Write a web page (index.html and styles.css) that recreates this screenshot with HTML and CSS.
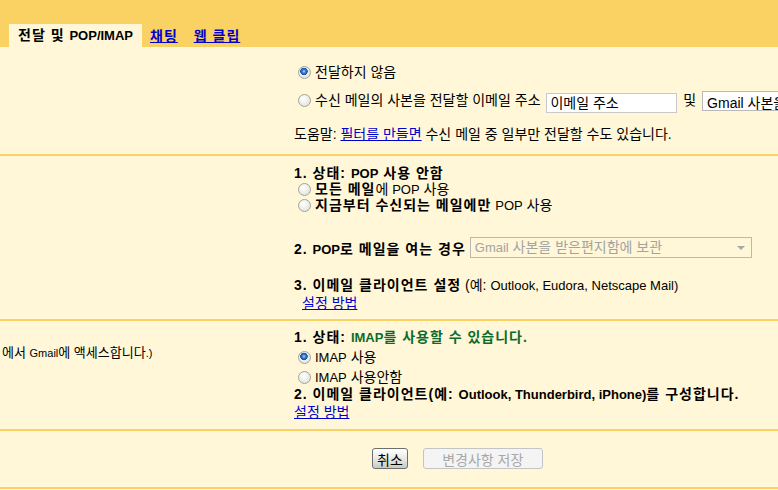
FILE: index.html
```html
<!DOCTYPE html>
<html lang="ko">
  <head>
    <meta charset="UTF-8" />
    <link rel="stylesheet" href="styles.css">
    <title>설정 - 전달 및 POP/IMAP</title>
  </head>
  <body>
    <div class="tabs">
      <span class="tab active">전달 및 <span class="en">POP/IMAP</span></span>
      <a class="tab" href="#">채팅</a>
      <a class="tab" href="#">웹 클립</a>
    </div>

    <div class="section forward">
      <div class="label"></div>
      <div class="content">
        <label class="opt first"><input type="radio" name="fwd" checked />전달하지 않음</label>
        <label class="opt addr">
          <input type="radio" name="fwd" />수신 메일의 사본을 전달할 이메일 주소
          <input class="text" type="text" value="이메일 주소" />
          및
          <select class="keep"><option>Gmail 사본을 받은편지함에 보관</option></select>
        </label>
        <p class="help">도움말: <a href="#">필터를 만들면</a> 수신 메일 중 일부만 전달할 수도 있습니다.</p>
      </div>
    </div>

    <div class="section pop">
      <div class="label"></div>
      <div class="content">
        <div class="head"><b>1. 상태: <span class="en">POP</span> 사용 안함</b></div>
        <label class="opt"><input type="radio" name="pop" /><b>모든 메일</b>에 <span class="en">POP</span> 사용</label>
        <label class="opt"><input type="radio" name="pop" /><b>지금부터 수신되는 메일에만</b> <span class="en">POP</span> 사용</label>
        <div class="when">
          <b>2. <span class="en">POP</span>로 메일을 여는 경우</b>
          <span class="fakeSelect"><span class="en">Gmail</span> 사본을 받은편지함에 보관</span>
        </div>
        <div class="client"><b>3. 이메일 클라이언트 설정</b> (예: <span class="en">Outlook, Eudora, Netscape Mail)</span></div>
        <a class="howto indent" href="#">설정 방법</a>
      </div>
    </div>

    <div class="section imap">
      <div class="label"><span class="cut">에서 <small>Gmail</small>에 액세스합니다<small>.)</small></span></div>
      <div class="content">
        <div class="head"><b>1. 상태: <span class="ok"><span class="en">IMAP</span>를 사용할 수 있습니다.</span></b></div>
        <div class="radios">
          <label class="opt"><input type="radio" name="imap" checked /><span class="en">IMAP</span> 사용</label>
          <label class="opt"><input type="radio" name="imap" /><span class="en">IMAP</span> 사용안함</label>
        </div>
        <div class="client"><b>2. 이메일 클라이언트(예: <span class="en">Outlook, Thunderbird, iPhone)</span>를 구성합니다.</b></div>
        <a class="howto" href="#">설정 방법</a>
      </div>
    </div>

    <div class="section actions">
      <div class="label"></div>
      <div class="content">
        <button type="button" class="btn">취소</button>
        <button type="button" class="btn" disabled>변경사항 저장</button>
      </div>
    </div>
  </body>
</html>
```

FILE: styles.css
```css
html,
body {
  margin: 0;
  overflow: hidden;
}

body {
  font-family: "Liberation Sans", "Noto Sans CJK KR", sans-serif;
  font-size: 14px;
  color: #000;
  background-color: #fff7d7;
  width: 778px;
  height: 490px;
}

.en {
  font-size: 13px;
}

/* old fake-bold hangul is a pixel wider per glyph */
b,
.tab {
  letter-spacing: 1px;
}

b .en,
.tab .en {
  letter-spacing: 0;
}

a {
  color: #0000cc;
}

.tabs {
  background-color: #fad163;
  height: 47px;
  display: flex;
  align-items: flex-end;
  padding-left: 9px;
}

.tab {
  font-weight: bold;
  line-height: 22px;
  padding: 0 8px 0 8px;
}

.tab.active {
  background-color: #fff7d7;
  padding: 0 9px 0 9px;
}

.section {
  display: grid;
  grid-template-columns: 294px 1fr;
  border-bottom: 2px solid #fad163;
  white-space: nowrap;
}

.content {
  display: flex;
  flex-direction: column;
  align-items: flex-start;
}

.opt,
.head,
.client,
.howto {
  display: block;
}

/* radios drawn like the old windows ones */
input[type="radio"] {
  appearance: none;
  box-sizing: border-box;
  width: 13px;
  height: 13px;
  margin: 0 4px 0 4px;
  border: 1px solid #a4a49c;
  border-radius: 50%;
  background: radial-gradient(circle at 40% 35%, #ffffff, #dcdcd4);
  vertical-align: -2px;
}

input[type="radio"]:checked {
  background: radial-gradient(circle at 45% 40%, #bfe0ff 0, #3c86d8 1.5px, #1a4f9e 3.5px, transparent 4px),
    radial-gradient(circle at 40% 35%, #ffffff, #dcdcd4);
}

/* forwarding */
.forward .content {
  padding: 16px 0 11px 0;
}

.forward .first {
  height: 18px;
  line-height: 18px;
}

.forward .addr {
  margin-top: 8px;
  height: 22px;
  line-height: 22px;
}

.text {
  box-sizing: border-box;
  width: 131px;
  height: 20px;
  margin: 0 2px;
  padding: 0 3px;
  border: 1px solid #c9c9c9;
  font: inherit;
  vertical-align: -3px;
}

.keep {
  appearance: none;
  box-sizing: border-box;
  height: 20px;
  margin-left: 2px;
  padding: 0 4px;
  border: 1px solid #b9b9b9;
  background: #fff;
  font: inherit;
  vertical-align: -3px;
}

.help {
  margin: 15px 0 0 0;
  height: 17px;
  line-height: 17px;
}

/* pop */
.pop .content {
  padding: 9px 0 7px 0;
}

.pop .head,
.pop .opt {
  height: 16px;
  line-height: 16px;
}

.when {
  margin-top: 24px;
  display: flex;
  align-items: center;
  gap: 4px;
  height: 21px;
}

.fakeSelect {
  position: relative;
  box-sizing: border-box;
  width: 282px;
  height: 21px;
  line-height: 19px;
  padding: 0 4px;
  border: 1px solid #b9b9b9;
  color: #a3a3a3;
}

.fakeSelect::after {
  content: "";
  position: absolute;
  right: 6px;
  top: 8px;
  border-left: 4px solid transparent;
  border-right: 4px solid transparent;
  border-top: 4px solid #a8a8a8;
}

.pop .client {
  margin-top: 19px;
  height: 17px;
  line-height: 17px;
}

.howto {
  height: 17px;
  line-height: 17px;
}

.pop .howto {
  margin-top: 1px;
}

.howto.indent {
  margin-left: 8px;
}

/* imap */
.imap .label {
  padding-top: 23px;
  line-height: 17px;
  font-size: 13px;
}

.imap .cut {
  padding-left: 2px;
}

.imap small {
  font-size: 11px;
}

.imap .content {
  padding: 8px 0 8px 0;
}

.imap .head {
  height: 17px;
  line-height: 17px;
}

.imap .radios {
  margin-top: 1px;
}

.imap .opt {
  height: 20px;
  line-height: 20px;
}

.imap .client {
  height: 15px;
  line-height: 15px;
}

.imap .howto {
  margin-top: 2px;
}

.ok {
  color: #0b6b2c;
}

/* buttons */
.actions .content {
  flex-direction: row;
  gap: 15px;
  padding: 17px 0 18px 78px;
}

.btn {
  height: 21px;
  padding: 0 4px;
  border: 1px solid #6f6f6f;
  border-radius: 3px;
  background: linear-gradient(#ffffff, #e4e4e0 60%, #c8c8c4);
  font: inherit;
  color: #000;
}

.btn:disabled {
  width: 120px;
  border-color: #c4c4c4;
  background: #f4f4f4;
  color: #a8a8a8;
}
```
